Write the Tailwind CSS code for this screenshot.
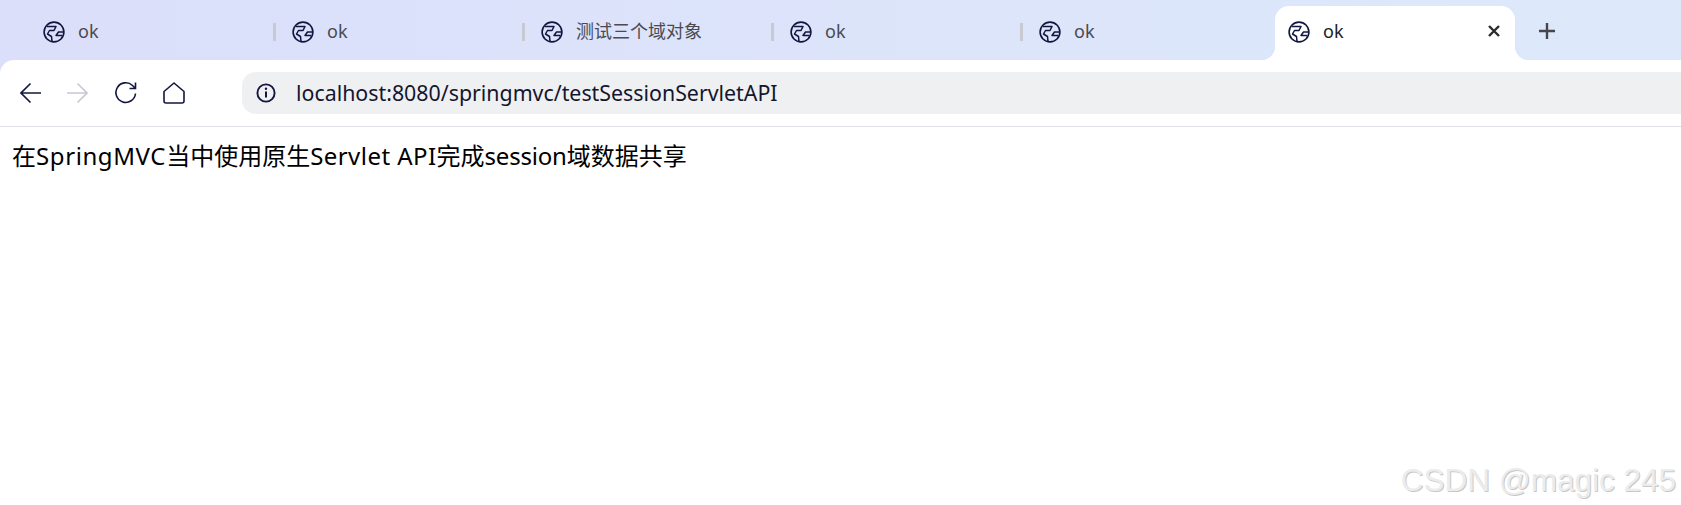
<!DOCTYPE html>
<html lang="zh-CN">
<head>
    <meta charset="UTF-8">
    <title>ok</title>
    <script src="https://cdn.jsdelivr.net/npm/@tailwindcss/browser@4"></script>
</head>
<body class="relative h-[505px] w-[1681px] overflow-hidden bg-white font-['Noto_Sans','Noto_Sans_CJK_SC',sans-serif]">
    <svg width="0" height="0" class="absolute">
        <symbol id="globe" viewBox="0 0 22 22">
            <circle cx="11" cy="11" r="9.9" fill="none" stroke="#12163f" stroke-width="1.6"/>
            <path d="M4 5.5 H13 L11 9.5 H6.5 L4.5 13 L8.5 15.5 L9 20.5" fill="none" stroke="#12163f" stroke-width="1.5" stroke-linejoin="round"/>
            <path d="M20.5 11 H15.5 L13 14.5 H19" fill="none" stroke="#12163f" stroke-width="1.5" stroke-linejoin="round"/>
        </symbol>
    </svg>

    <!-- tab strip -->
    <div class="flex h-[60px] items-end bg-gradient-to-r from-[#dbdffa] to-[#dde9fa]">
        <div class="flex h-[54px] w-[276px] shrink-0 items-center pb-[2px] pl-[43px]">
            <svg class="mr-[13px] size-[22px] shrink-0"><use href="#globe"/></svg>
            <span class="flex-1 -translate-y-px text-[18px] text-[#4a4a50]">ok</span>
            <span class="h-[18px] w-[3px] bg-[#c8cad2]"></span>
        </div>
        <div class="flex h-[54px] w-[249px] shrink-0 items-center pb-[2px] pl-[16px]">
            <svg class="mr-[13px] size-[22px] shrink-0"><use href="#globe"/></svg>
            <span class="flex-1 -translate-y-px text-[18px] text-[#4a4a50]">ok</span>
            <span class="h-[18px] w-[3px] bg-[#c8cad2]"></span>
        </div>
        <div class="flex h-[54px] w-[249px] shrink-0 items-center pb-[2px] pl-[16px]">
            <svg class="mr-[13px] size-[22px] shrink-0"><use href="#globe"/></svg>
            <span class="flex-1 -translate-y-px text-[18px] text-[#4a4a50]">测试三个域对象</span>
            <span class="h-[18px] w-[3px] bg-[#c8cad2]"></span>
        </div>
        <div class="flex h-[54px] w-[249px] shrink-0 items-center pb-[2px] pl-[16px]">
            <svg class="mr-[13px] size-[22px] shrink-0"><use href="#globe"/></svg>
            <span class="flex-1 -translate-y-px text-[18px] text-[#4a4a50]">ok</span>
            <span class="h-[18px] w-[3px] bg-[#c8cad2]"></span>
        </div>
        <div class="flex h-[54px] w-[252px] shrink-0 items-center pb-[2px] pl-[16px]">
            <svg class="mr-[13px] size-[22px] shrink-0"><use href="#globe"/></svg>
            <span class="flex-1 -translate-y-px text-[18px] text-[#4a4a50]">ok</span>
        </div>
        <!-- active tab -->
        <div class="relative flex h-[54px] w-[240px] shrink-0 items-center rounded-t-[14px] bg-white pb-[2px] pl-[13px] pr-[15px]">
            <svg class="mr-[13px] size-[22px] shrink-0"><use href="#globe"/></svg>
            <span class="flex-1 -translate-y-px text-[18px] text-[#202124]">ok</span>
            <svg class="mb-[2px] size-[12px]" viewBox="0 0 12 12"><path d="M1 1 L11 11 M11 1 L1 11" stroke="#2a2a30" stroke-width="2.4"/></svg>
            <span class="absolute bottom-0 left-[-14px] size-[14px] bg-[radial-gradient(circle_at_0_0,transparent_14px,white_14.5px)]"></span>
            <span class="absolute bottom-0 right-[-14px] size-[14px] bg-[radial-gradient(circle_at_100%_0,transparent_14px,white_14.5px)]"></span>
        </div>
        <div class="flex h-[54px] flex-1 items-center pb-[2px] pl-[24px]">
            <svg class="mb-[3px] size-[16px]" viewBox="0 0 16 16"><path d="M8 0 V16 M0 8 H16" stroke="#46464c" stroke-width="2.4"/></svg>
        </div>
    </div>

    <!-- toolbar, the lavender behind it shows in the rounded corner -->
    <div class="bg-[#dbdffa]">
        <div class="flex h-[67px] items-center rounded-tl-[14px] border-b border-[#e0e0e8] bg-white pl-[20px]">
            <svg class="size-[22px]" viewBox="0 0 22 22"><path d="M21 11 H1.5 M10.5 1.5 L1 11 L10.5 20.5" fill="none" stroke="#12163f" stroke-width="1.6"/></svg>
            <svg class="ml-[24px] size-[22px]" viewBox="0 0 22 22"><path d="M1 11 H20.5 M11.5 1.5 L21 11 L11.5 20.5" fill="none" stroke="#c6c8d2" stroke-width="1.6"/></svg>
            <svg class="ml-[26px] size-[24px]" viewBox="0 0 24 24"><path d="M21.5 12.5 A9.8 9.8 0 1 1 18.5 4.5 L21 7 M21.5 1.5 V7.5 H15.5" fill="none" stroke="#12163f" stroke-width="1.6"/></svg>
            <svg class="ml-[25px] size-[22px]" viewBox="0 0 22 22"><path d="M11 1 L21 9.5 V19 Q21 21 19 21 H3 Q1 21 1 19 V9.5 Z" fill="none" stroke="#12163f" stroke-width="1.6" stroke-linejoin="round"/></svg>
            <div class="ml-[57px] flex h-[42px] flex-1 items-center rounded-l-[14px] bg-[#eff0f2] pl-[14px]">
                <svg class="size-[20px]" viewBox="0 0 20 20"><circle cx="10" cy="10" r="8.6" fill="none" stroke="#12163f" stroke-width="1.9"/><path d="M10 8.5 V14.5" stroke="#12163f" stroke-width="2"/><circle cx="10" cy="5.8" r="1.2" fill="#12163f"/></svg>
                <span class="ml-[20px] text-[21.35px] text-[#14162e]">localhost:8080/springmvc/testSessionServletAPI</span>
            </div>
        </div>
    </div>

    <!-- page -->
    <p class="pl-[12px] pt-[9px] text-[24px] leading-[40px] text-black">在<span class="tracking-[0.6px]">SpringMVC</span>当中使用原生<span class="tracking-[0.45px]">Servlet API</span>完成<span class="tracking-[-0.2px]">session</span>域数据共享</p>

    <!-- watermark over the page -->
    <span class="absolute bottom-[5px] right-[5px] font-['Liberation_Sans',sans-serif] text-[31.5px] leading-[40px] text-[#ececec] [text-shadow:1px_1px_0_#c8c8c8]">CSDN @magic 245</span>
</body>
</html>
